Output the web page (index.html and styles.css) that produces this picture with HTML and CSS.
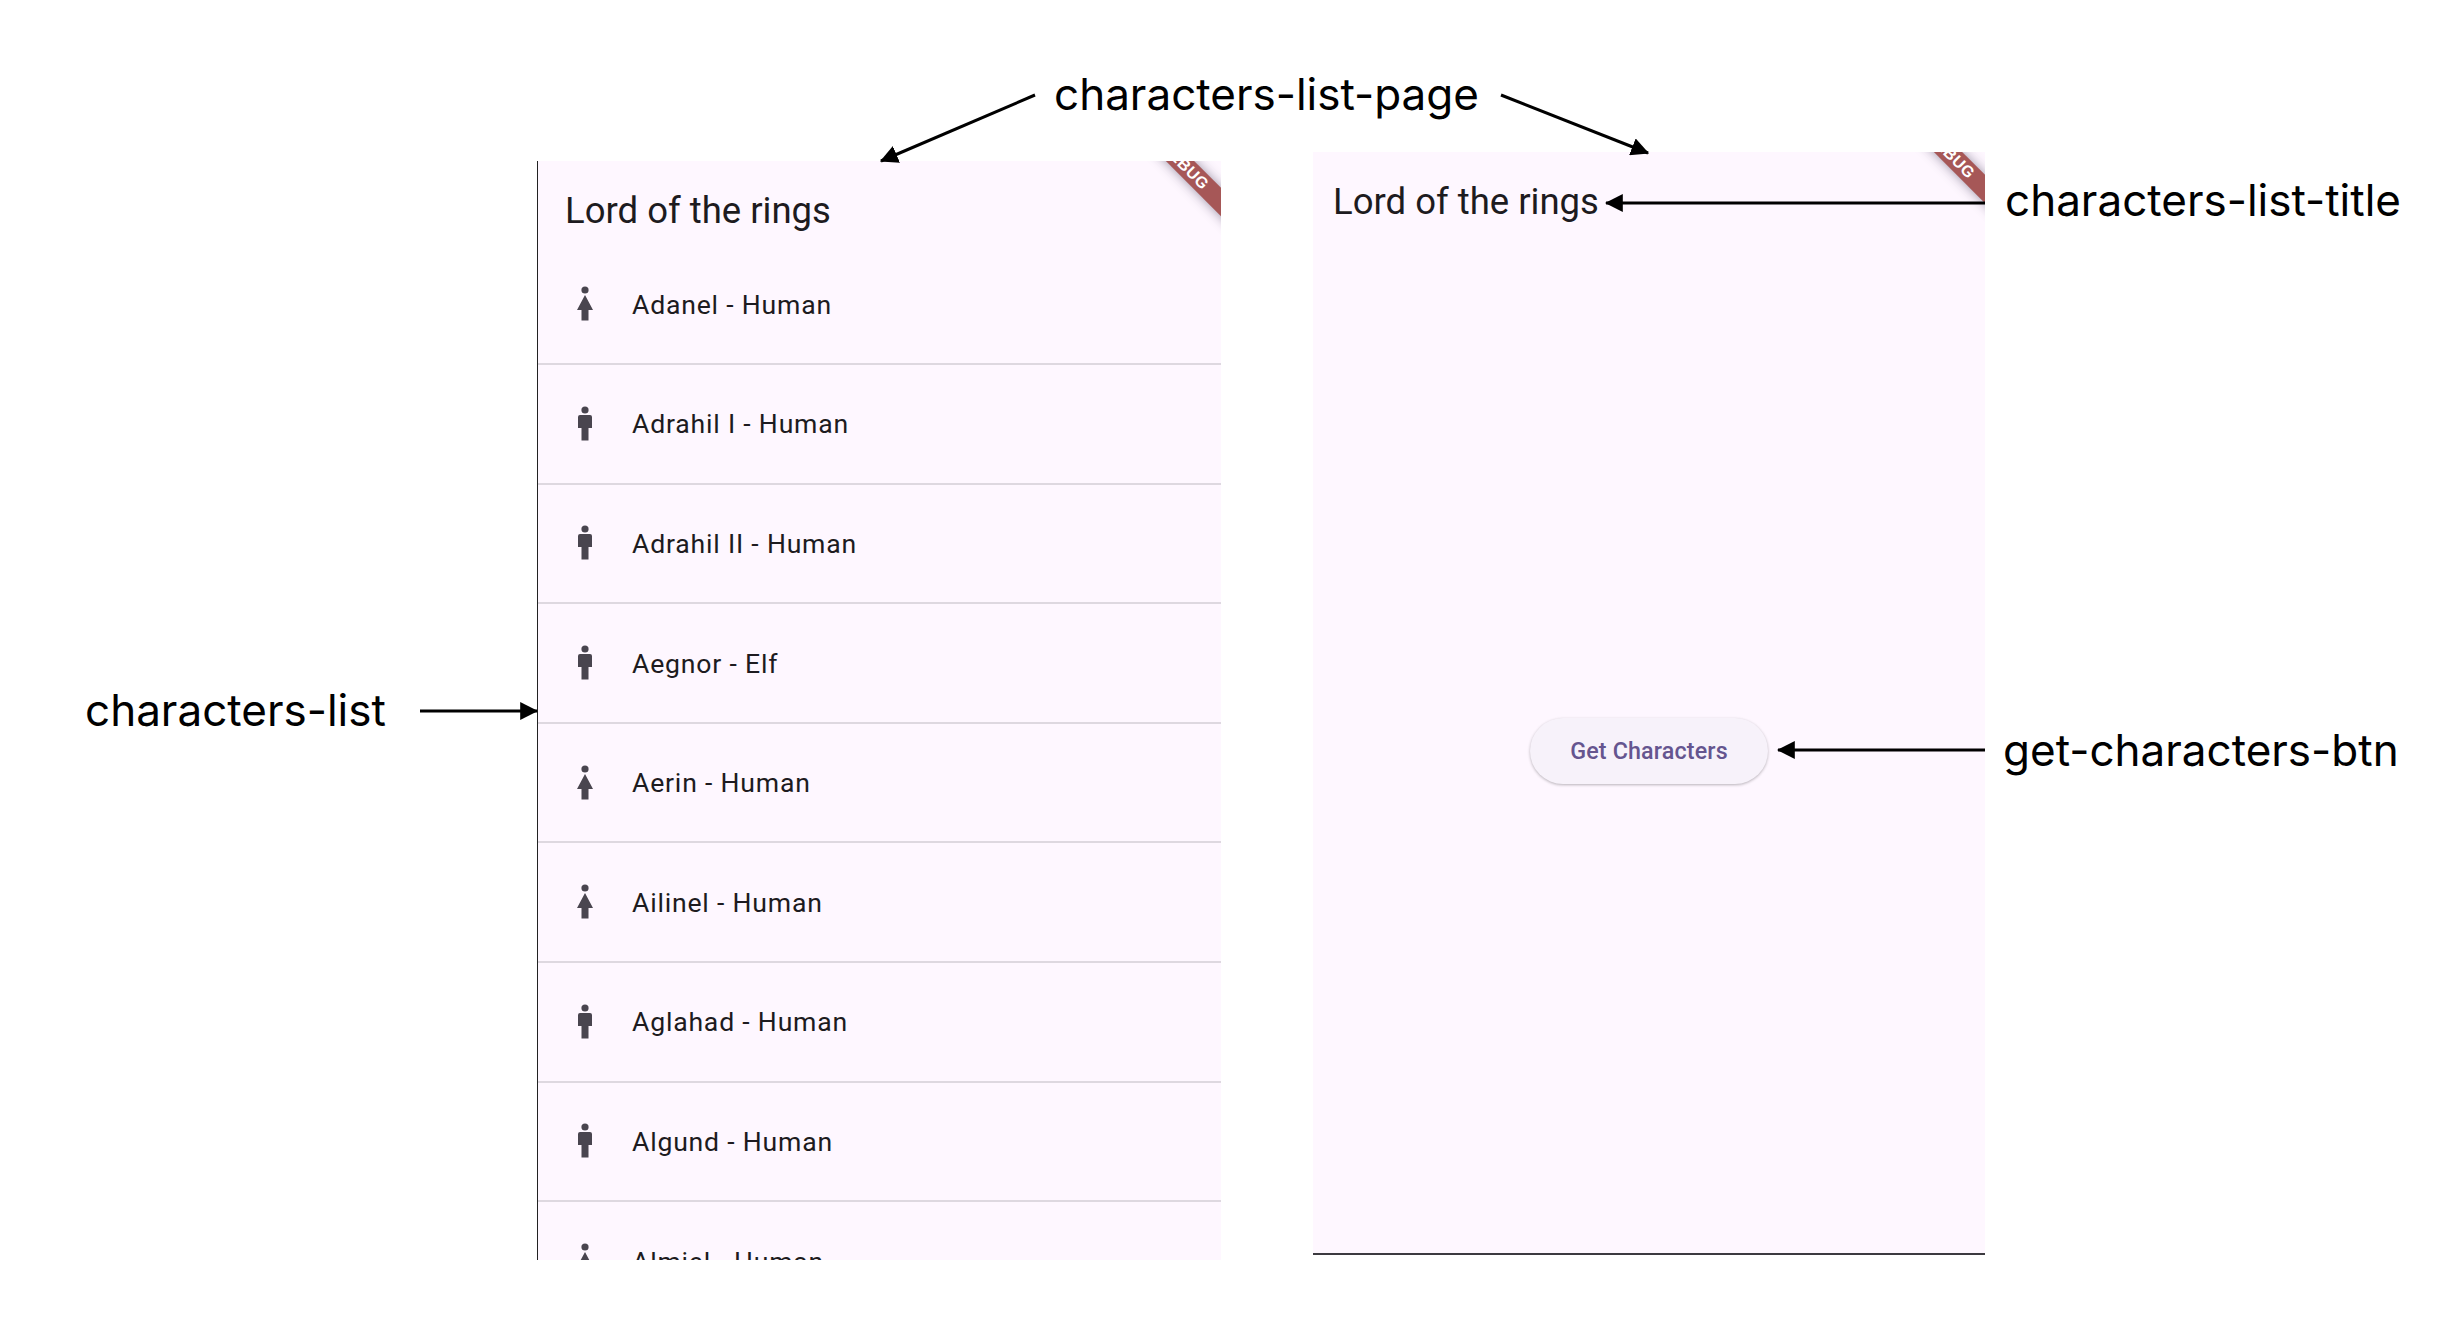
FILE: index.html
```html
<!DOCTYPE html>
<html lang="en">
<head>
    <meta charset="UTF-8">
    <title>Lord of the rings - page objects</title>
    <link rel="stylesheet" href="styles.css">
</head>
<body>
    <svg width="0" height="0" class="defs">
        <defs>
            <symbol id="woman" viewBox="0 0 20 36">
                <circle cx="10" cy="4" r="3.6"/>
                <path d="M10 9 L18 24 H13.5 V34.5 H6.5 V24 H2 Z"/>
            </symbol>
            <symbol id="man" viewBox="0 0 20 36">
                <circle cx="10" cy="4" r="3.6"/>
                <path d="M5 9 H15 Q17 9 17 11 V22 H13.5 V34.5 H6.5 V22 H3 V11 Q3 9 5 9 Z"/>
            </symbol>
            <marker id="head" markerWidth="6" markerHeight="6" refX="5.6" refY="3" orient="auto">
                <path d="M0 0 L6 3 L0 6 Z" fill="#000"/>
            </marker>
        </defs>
    </svg>

    <main class="stage">
        <section class="phone phone-list">
            <div class="banner"><span>DEBUG</span></div>
            <header class="appbar appbar-list">Lord of the rings</header>
            <ul class="list">
                <li class="row"><svg class="icon"><use href="#woman"/></svg>Adanel - Human</li>
                <li class="row"><svg class="icon"><use href="#man"/></svg>Adrahil I - Human</li>
                <li class="row"><svg class="icon"><use href="#man"/></svg>Adrahil II - Human</li>
                <li class="row"><svg class="icon"><use href="#man"/></svg>Aegnor - Elf</li>
                <li class="row"><svg class="icon"><use href="#woman"/></svg>Aerin - Human</li>
                <li class="row"><svg class="icon"><use href="#woman"/></svg>Ailinel - Human</li>
                <li class="row"><svg class="icon"><use href="#man"/></svg>Aglahad - Human</li>
                <li class="row"><svg class="icon"><use href="#man"/></svg>Algund - Human</li>
                <li class="row"><svg class="icon"><use href="#woman"/></svg>Almiel - Human</li>
            </ul>
        </section>

        <section class="phone phone-empty">
            <div class="banner"><span>DEBUG</span></div>
            <header class="appbar appbar-empty">Lord of the rings</header>
            <div class="center">
                <button class="btn">Get Characters</button>
            </div>
        </section>
    </main>

    <!-- annotations on top of the screenshots -->
    <svg class="arrows" width="2442" height="1338">
        <g stroke="#000" stroke-width="3" fill="none" marker-end="url(#head)">
            <line x1="1035" y1="95" x2="881" y2="161"/>
            <line x1="1501" y1="95" x2="1648" y2="153"/>
            <line x1="1985" y1="203" x2="1606" y2="203"/>
            <line x1="420" y1="711" x2="537" y2="711"/>
            <line x1="1985" y1="750" x2="1778" y2="750"/>
        </g>
    </svg>
    <span class="label label-page">characters-list-page</span>
    <span class="label label-title">characters-list-title</span>
    <span class="label label-list">characters-list</span>
    <span class="label label-btn">get-characters-btn</span>
</body>
</html>
```

FILE: styles.css
```css
html, body {
    margin: 0;
    padding: 0;
    background-color: #fff;
}

body {
    position: relative;
    width: 2442px;
    height: 1338px;
    overflow: hidden;
    font-family: Roboto, sans-serif;
}

.defs {
    position: absolute;
}

.stage {
    display: flex;
    align-items: flex-start;
    gap: 92px;
    padding: 152px 0 0 537px;
}

.phone {
    position: relative;
    overflow: hidden;
    background-color: #fef7ff;
    box-sizing: border-box;
}

.phone-list {
    width: 684px;
    height: 1099px;
    margin-top: 9px;
    border-left: 1px solid #222;
}

.phone-empty {
    display: flex;
    flex-direction: column;
    width: 672px;
    height: 1103px;
    border-bottom: 2px solid #3c3a40;
}

.appbar {
    display: flex;
    align-items: center;
    box-sizing: border-box;
    font-size: 36.5px;
    color: #1d1b20;
}

.appbar-list {
    height: 84.5px;
    padding: 15px 0 0 27px;
}

.appbar-empty {
    height: 96.5px;
    padding: 3px 0 0 20px;
}

.list {
    list-style: none;
    margin: 0;
    padding: 0;
}

.row {
    display: flex;
    align-items: center;
    box-sizing: border-box;
    height: 119.6px;
    padding-left: 37px;
    border-bottom: 2px solid #ded8e0;
    font-size: 26.6px;
    letter-spacing: 0.8px;
    color: #1d1b20;
}

.icon {
    width: 20px;
    height: 36px;
    margin-right: 37px;
    fill: #49454f;
}

.center {
    flex: 1;
    display: flex;
    align-items: center;
    justify-content: center;
}

.btn {
    width: 238px;
    height: 66px;
    border: none;
    border-radius: 33px;
    background-color: #f7f2fa;
    box-shadow: 0 1px 3px rgba(0, 0, 0, 0.28);
    color: #65558f;
    font-family: Roboto, sans-serif;
    font-size: 23.3px;
    font-weight: 500;
    letter-spacing: 0.15px;
}

.banner {
    position: absolute;
    top: 10.5px;
    right: -79.5px;
    width: 200px;
    height: 20px;
    background-color: #a65757;
    box-shadow: 0 0 12px rgba(40, 30, 60, 0.45);
    transform: rotate(45deg);
    display: flex;
    align-items: center;
    justify-content: center;
    padding-right: 46px;
    box-sizing: border-box;
}

.phone-empty .banner {
    top: 8.5px;
    right: -81.5px;
}

.banner span {
    color: #fff;
    font-family: "Liberation Sans", sans-serif;
    font-size: 16px;
    font-weight: 700;
    letter-spacing: 0.5px;
}

.arrows {
    position: absolute;
    top: 0;
    left: 0;
}

.label {
    position: absolute;
    font-family: Inter, sans-serif;
    font-size: 44px;
    line-height: 52px;
    color: #000;
    white-space: nowrap;
}

.label-page {
    left: 1054px;
    top: 68px;
}

.label-title {
    left: 2005px;
    top: 174px;
}

.label-list {
    left: 85px;
    top: 684px;
}

.label-btn {
    left: 2003px;
    top: 724px;
}
```
